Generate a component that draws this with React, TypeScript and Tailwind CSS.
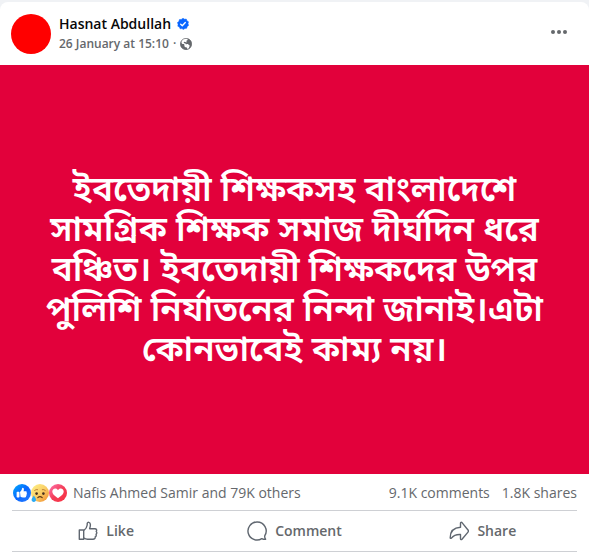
import type { ReactNode } from 'react';

const status =
  'ইবতেদায়ী শিক্ষকসহ বাংলাদেশে সামগ্রিক শিক্ষক সমাজ দীর্ঘদিন ধরে বঞ্চিত। ইবতেদায়ী শিক্ষকদের উপর পুলিশি নির্যাতনের নিন্দা জানাই।এটা কোনভাবেই কাম্য নয়।';

function VerifiedBadge() {
  return (
    <svg viewBox="0 0 12 12" className="size-3" role="img" aria-label="Verified account">
      <path
        fill="#0866ff"
        d="M6 .2 7.5 1.2 9.3 1.1 9.9 2.8 11.5 3.8 11 5.6 11.6 7.4 10.2 8.5 9.7 10.3 7.9 10.4 6.4 11.6 5 10.6 3.1 10.8 2.4 9.1.8 8.2 1.1 6.3.4 4.6 1.9 3.4 2.4 1.6 4.3 1.4Z"
        stroke="#0866ff"
        strokeWidth=".5"
        strokeLinejoin="round"
      />
      <path d="m3.7 6.2 1.6 1.5 3-3.2" fill="none" stroke="#fff" strokeWidth="1.3" strokeLinecap="round" strokeLinejoin="round" />
    </svg>
  );
}

function GlobeIcon() {
  return (
    <svg viewBox="94 400.5 16 16" className="size-3" fill="#65686c" role="img" aria-label="Shared with Public">
      <path d="M109.5 408.5c0 3.23-2.04 5.983-4.903 7.036l.07-.036c1.167-1 1.814-2.967 2-3.834.214-1 .303-1.3-.5-1.96-.31-.253-.677-.196-1.04-.476-.246-.19-.356-.59-.606-.73-.594-.337-1.107.11-1.954.223a2.666 2.666 0 0 1-1.15-.123l-.096-.034c-.164-.082-.077-.206.006-.36.08-.17.08-.376-.056-.529-.19-.214-.54-.214-.804-.224l-.316 0-.161.004c-.323.007-.666-.034-.893-.314-.263-.353-.29-.733.097-1.09.28-.26.863-.8 1.807-.22.603.37 1.166.667 1.666.5.33-.11.48-.303.094-.87a1.128 1.128 0 0 1-.214-.73c.067-.776.687-.84 1.164-1.2.466-.356.68-.943.546-1.457-.106-.413-.51-.873-1.28-1.01a7.49 7.49 0 0 1 6.524 7.434" />
      <path d="M104.107 415.696A7.498 7.498 0 0 1 94.5 408.5a7.48 7.48 0 0 1 3.407-6.283 5.474 5.474 0 0 0-1.653 2.334c-.753 2.217-.217 4.075 2.29 4.075.833 0 1.4.561 1.333 2.375-.013.403.52 1.78 2.45 1.89.7.04 1.184 1.053 1.33 1.74.06.29.127.65.257.97a.174.174 0 0 0 .193.096" />
      <circle cx="102" cy="408.5" r="7.5" fill="none" stroke="#65686c" />
    </svg>
  );
}

function LikeReaction() {
  return (
    <svg viewBox="0 0 18 18" className="size-[18px]" aria-hidden="true">
      <defs>
        <linearGradient id="like-fill" x1="0" y1="0" x2="1" y2="1">
          <stop stopColor="#02adfc" />
          <stop offset=".5" stopColor="#0866ff" />
          <stop offset="1" stopColor="#2b7eff" />
        </linearGradient>
      </defs>
      <circle cx="9" cy="9" r="9" fill="url(#like-fill)" />
      <path
        fill="#fff"
        d="M7.5 12.8c.7.6 1.5.7 2.5.7 1.5 0 2.7 0 3-.6.2-.3.2-.7 0-1 .6-.3.8-.9.5-1.5.5-.4.6-1.1.1-1.5.5-1-.1-1.7-1.1-1.7h-1.9c.4-1 .4-2.1.1-2.9-.3-.8-1.6-.9-1.7.2-.1 1.5-1.1 2.5-2 3.4Zm-3.1-5h1.4c.4 0 .7.3.7.7v4.3c0 .4-.3.7-.7.7H4.4c-.5 0-.8-.3-.8-.7V8.5c0-.4.3-.7.8-.7Z"
      />
    </svg>
  );
}

function SadReaction() {
  return (
    <svg viewBox="0 0 18 18" className="size-[18px]" aria-hidden="true">
      <defs>
        <linearGradient id="sad-fill" x1="0" y1="0" x2="1" y2="1">
          <stop stopColor="#fff287" />
          <stop offset=".5" stopColor="#f9cf68" />
          <stop offset="1" stopColor="#f28a2d" />
        </linearGradient>
      </defs>
      <circle cx="9" cy="9" r="9" fill="url(#sad-fill)" />
      <path d="M3.6 6.4q1.6-1.3 3-.8M11.3 5.6q1.5-.5 3 .8" fill="none" stroke="#a05b22" strokeWidth=".7" strokeLinecap="round" />
      <ellipse cx="5.6" cy="9.6" rx="1.3" ry="1.4" fill="#45301f" />
      <ellipse cx="12.4" cy="9.6" rx="1.3" ry="1.4" fill="#45301f" />
      <path d="M6.8 13.6q2.2-2.1 4.4 0" fill="none" stroke="#5b3817" strokeWidth="1.2" strokeLinecap="round" />
      <path d="M2.8 11.5C4 13.1 5 14.5 5 15.8 5 17.1 4.1 18 2.8 18S.6 17.1.6 15.8c0-1.3 1.2-2.7 2.2-4.3Z" fill="#2caaf3" />
    </svg>
  );
}

function LoveReaction() {
  return (
    <svg viewBox="0 0 18 18" className="size-[18px]" aria-hidden="true">
      <defs>
        <linearGradient id="love-fill" x1="0" y1="0" x2="1" y2="1">
          <stop stopColor="#ff74b0" />
          <stop offset=".5" stopColor="#f33e58" />
          <stop offset="1" stopColor="#f9303f" />
        </linearGradient>
      </defs>
      <circle cx="9" cy="9" r="9" fill="url(#love-fill)" />
      <path d="M9 6.3C8.4 5 7.4 4.5 6.3 4.5c-1.9 0-3 1.4-3 3.1 0 2.8 3.2 5 5.7 6.6 2.5-1.6 5.7-3.8 5.7-6.6 0-1.7-1.1-3.1-3-3.1-1.1 0-2.1.5-2.7 1.8Z" fill="#fff" />
    </svg>
  );
}

function ActionIcon({ children }: { children: ReactNode }) {
  return (
    <svg
      viewBox="0 0 20 20"
      className="size-5"
      fill="none"
      stroke="#606770"
      strokeWidth="1.4"
      strokeLinejoin="round"
      strokeLinecap="round"
      aria-hidden="true"
    >
      {children}
    </svg>
  );
}

function ActionButton({ label, children }: { label: string; children: ReactNode }) {
  return (
    <button type="button" className="flex flex-1 items-center justify-center gap-2 text-sm font-semibold">
      <ActionIcon>{children}</ActionIcon>
      {label}
    </button>
  );
}

export default function App() {
  return (
    <div className="min-h-screen bg-[#f0f2f5] pt-0.5 font-['Open_Sans','Noto_Sans',sans-serif] text-[#65686c]">
      <article className="min-h-[calc(100vh-2px)] rounded-t-lg bg-white">
        <header className="flex items-center gap-2 px-[11px] pt-3 pb-[11px]">
          <div className="size-10 shrink-0 rounded-full bg-[#ff0000]" />
          <div className="flex-1">
            <h2 className="flex items-center gap-1.5 text-sm leading-5 font-semibold text-[#080809]">
              <a href="#profile">Hasnat Abdullah</a>
              <VerifiedBadge />
            </h2>
            <div className="flex items-center gap-1 text-xs leading-5 font-semibold">
              <a href="#post">26 January at 15:10</a>
              <span>·</span>
              <GlobeIcon />
            </div>
          </div>
          <button type="button" aria-label="Actions for this post" className="flex size-9 items-center justify-center">
            <svg viewBox="0 0 20 20" className="size-5" fill="#65686c">
              <circle cx="3" cy="8" r="2" />
              <circle cx="9" cy="8" r="2" />
              <circle cx="15" cy="8" r="2" />
            </svg>
          </button>
        </header>

        <div className="flex h-[409px] items-center justify-center bg-[#e2013b] px-8 pt-1 text-center text-[35px] leading-10 font-semibold text-white">
          <p lang="bn" className="max-w-[520px] font-['Noto_Sans_Bengali','Nirmala_UI','Noto_Sans',sans-serif]">
            {status}
          </p>
        </div>

        <footer className="px-3">
          <div className="flex h-[37px] items-center justify-between border-b border-[#ced0d4] pt-0.5 text-sm">
            <div className="flex items-center gap-1.5 pl-px">
              <div className="flex">
                <LikeReaction />
                <SadReaction />
                <LoveReaction />
              </div>
              <a href="#reactions">Nafis Ahmed Samir and 79K others</a>
            </div>
            <div className="flex gap-3">
              <a href="#comments">9.1K comments</a>
              <a href="#shares">1.8K shares</a>
            </div>
          </div>
          <div className="flex h-[41px] border-b border-[#ced0d4]">
            <ActionButton label="Like">
              <path d="M1.3 9h4.4v9.2H1.3ZM5.7 9.6C7.6 8.2 9 6.1 9.2 4V2.4c0-1.7 3.2-1.5 3.2 1.3 0 1.5-.4 2.8-.8 4h5.3c1.6 0 2.3 1.6 1.3 2.7 1 .9.7 2.1-.2 2.8.6 1 .2 2.1-.8 2.6.3 1.5-.6 2.4-2.2 2.4H9.5c-1.5 0-2.6-.5-3.8-1.3" />
            </ActionButton>
            <ActionButton label="Comment">
              <path d="M10 1a9 9 0 1 0 4.8 16.6c1.2.6 2.5.9 3.8.7-.7-.9-1-2-.9-3.4A9 9 0 0 0 10 1Z" />
            </ActionButton>
            <ActionButton label="Share">
              <path d="M11.5 2.1v4.2C5.4 6.6 1.3 10 1.2 16.7c0 .8.8.9 1.2.4 2.2-2.9 5.2-3.8 9.1-3.6v4.2c0 .9.9 1.2 1.5.6l6-7.2c.5-.6.5-1.5 0-2.1l-6-7.4c-.7-.7-1.5-.3-1.5.5Z" />
            </ActionButton>
          </div>
        </footer>
      </article>
    </div>
  );
}
